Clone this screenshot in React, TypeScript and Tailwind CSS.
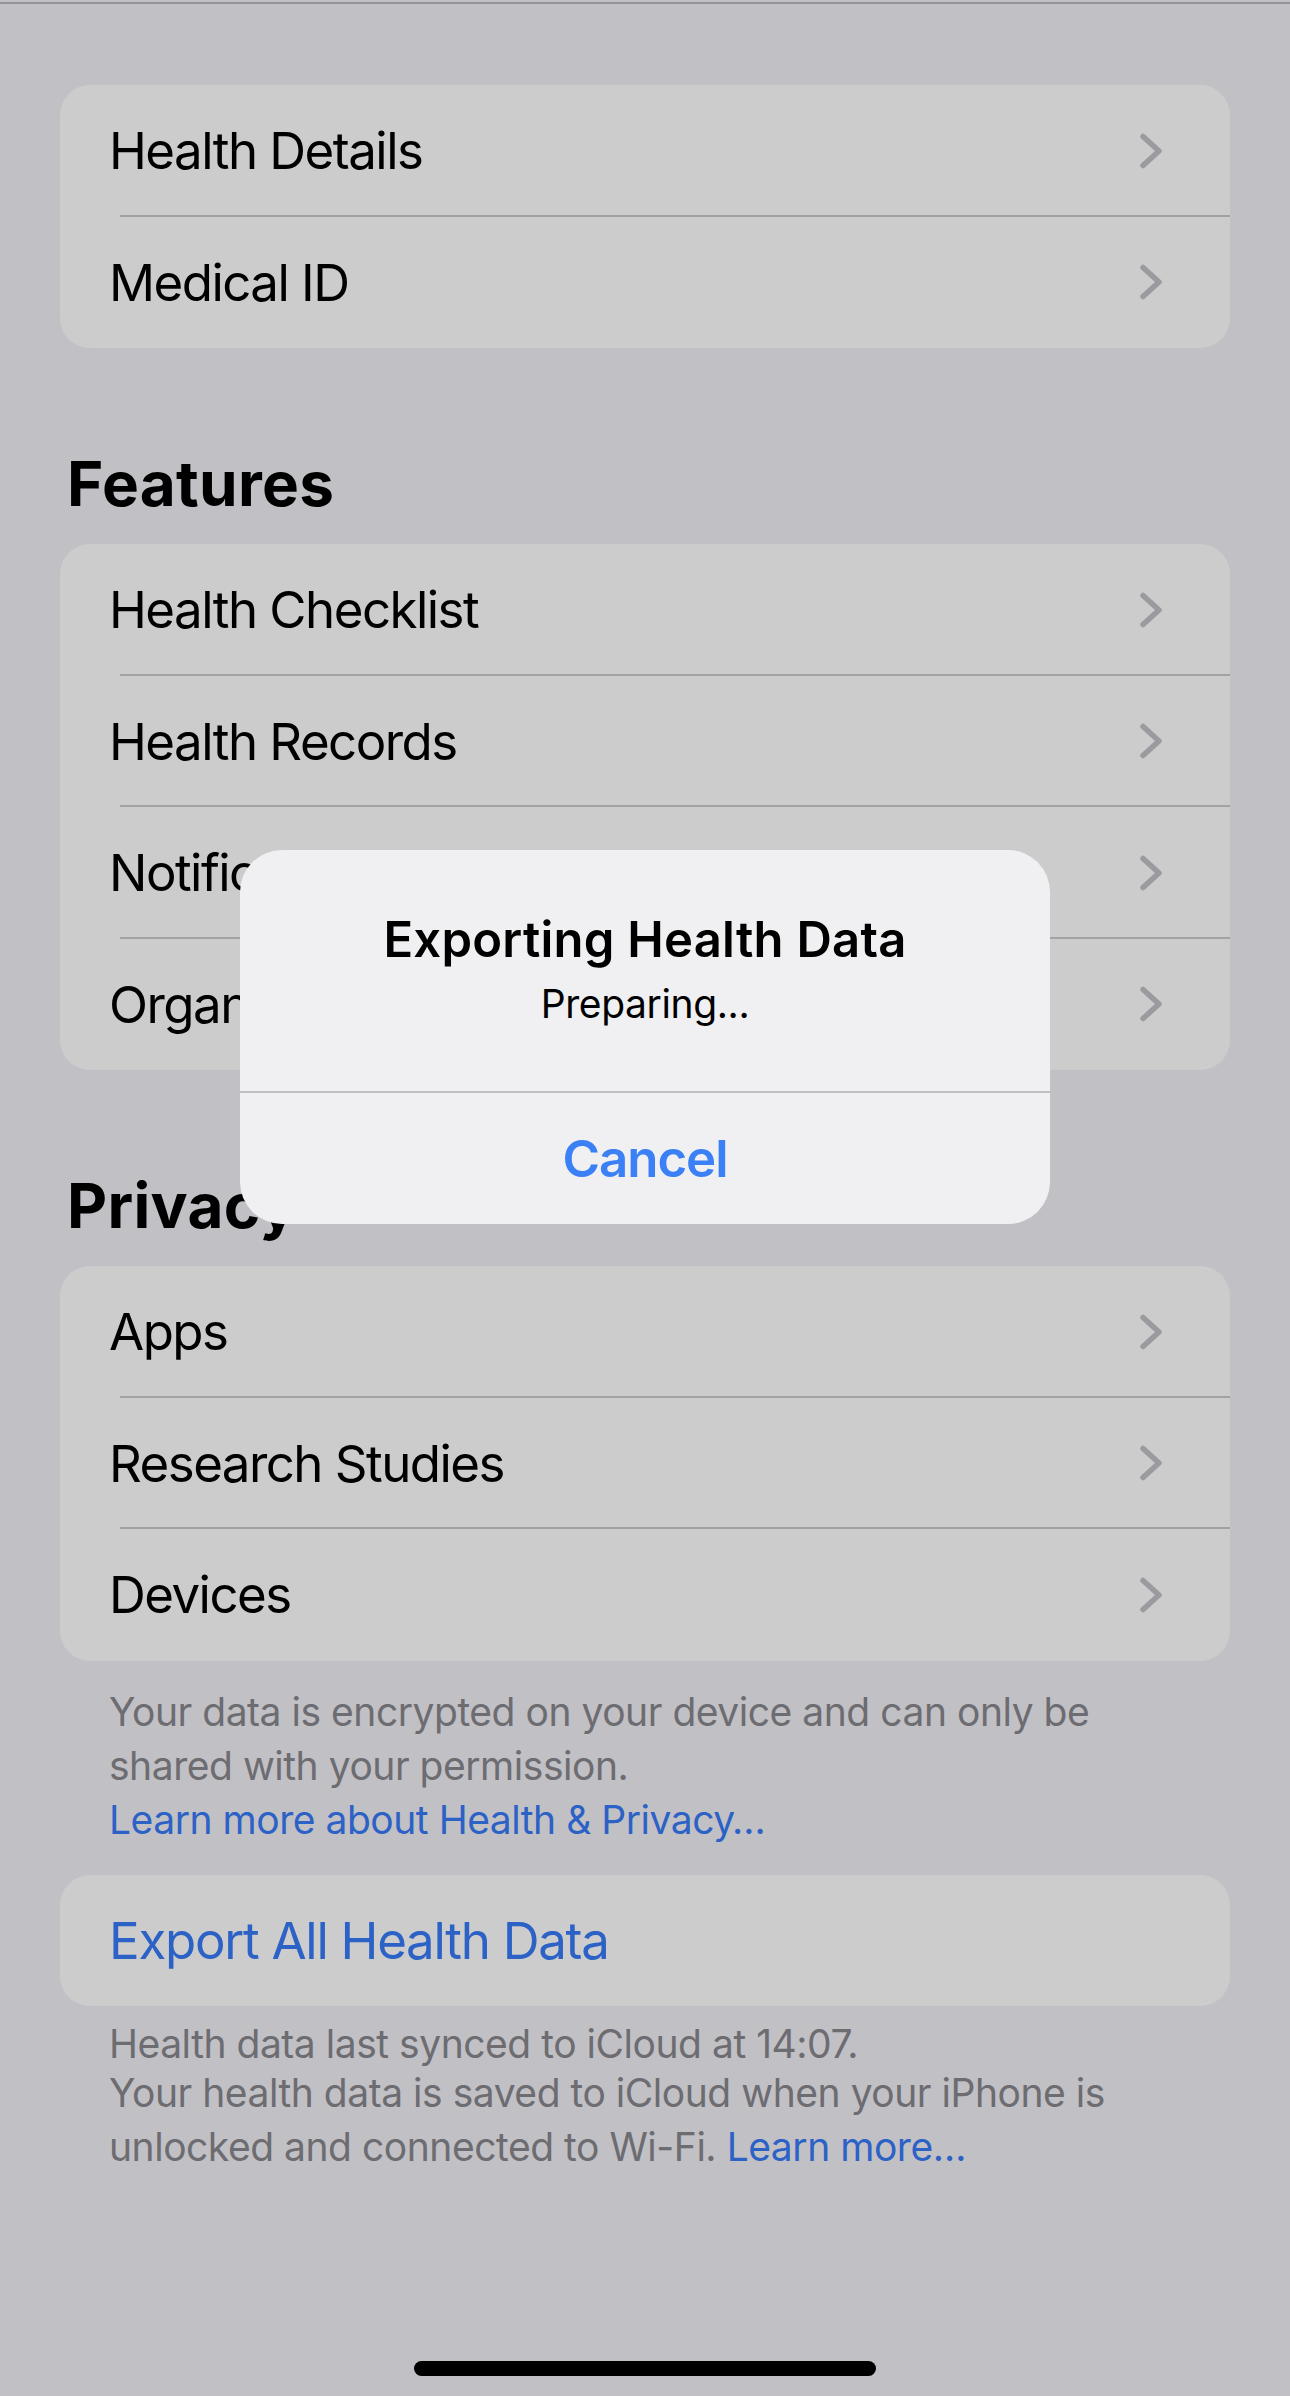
import React from "react";

const FONT = { fontFamily: "Inter, 'Noto Sans', sans-serif" };

function Chevron() {
  return (
    <svg width="25" height="36" viewBox="0 0 25 36" fill="none" className="shrink-0">
      <path d="M4 3.5 L20 18 L4 32.5" stroke="#9b9b9f" strokeWidth="5.5" strokeLinecap="round" strokeLinejoin="round" />
    </svg>
  );
}

function Row({ label, last }: { label: string; last?: boolean }) {
  return (
    <div className="relative flex h-[131.5px] items-center justify-between pl-[49px] pr-[66px]">
      <span className="text-[51px] leading-none tracking-[-0.03em] text-black">{label}</span>
      <Chevron />
      {!last && <div className="absolute bottom-0 left-[60px] right-0 h-[2px] bg-[#a2a2a5]" />}
    </div>
  );
}

function Group({ items }: { items: string[] }) {
  return (
    <div className="overflow-hidden rounded-[30px] bg-[#cccccc]">
      {items.map((it, i) => (
        <Row key={it} label={it} last={i === items.length - 1} />
      ))}
    </div>
  );
}

function Heading({ children }: { children: React.ReactNode }) {
  return (
    <h2 className="mt-[105px] mb-[29px] pl-[7px] text-[62px] font-bold leading-none tracking-[0.005em] text-black">
      {children}
    </h2>
  );
}

export default function App() {
  return (
    <div style={FONT} className="relative h-[2396px] w-[1290px] overflow-hidden bg-[#c1c0c5]">
      <div className="absolute left-0 right-0 top-[2px] h-[2px] bg-[#949497]" />

      <div className="px-[60px] pt-[85px]">
        <Group items={["Health Details", "Medical ID"]} />

        <Heading>Features</Heading>
        <Group items={["Health Checklist", "Health Records", "Notifications", "Organ Donation"]} />

        <Heading>Privacy</Heading>
        <Group items={["Apps", "Research Studies", "Devices"]} />

        <p className="mt-[24px] pl-[49px] pr-[40px] text-[39px] leading-[54px] tracking-[-0.012em] text-[#6c6c71]">
          Your data is encrypted on your device and can only be shared with your permission.
          <br />
          <span className="text-[#2c61c6]">Learn more about Health &amp; Privacy…</span>
        </p>

        <div className="mt-[28px] flex h-[131px] items-center rounded-[30px] bg-[#cccccc] pl-[49px]">
          <span className="text-[51px] leading-none tracking-[-0.025em] text-[#2c61c6]">Export All Health Data</span>
        </div>

        <div className="mt-[11px] pl-[49px] pr-[40px] text-[39px] leading-[54px] tracking-[-0.012em] text-[#6c6c71]">
          <p className="mb-[-5px]">Health data last synced to iCloud at 14:07.</p>
          <p>
            Your health data is saved to iCloud when your iPhone is unlocked and connected to Wi-Fi.{" "}
            <span className="text-[#2c61c6]">Learn more…</span>
          </p>
        </div>
      </div>

      {/* alert */}
      <div className="absolute left-[240px] top-[850px] w-[810px] overflow-hidden rounded-[42px] bg-[#f0f0f2]">
        <div className="flex flex-col items-center px-[40px] pb-[68px] pt-[65px]">
          <div className="text-[49px] font-semibold leading-none tracking-[0.005em] text-black">Exporting Health Data</div>
          <div className="mt-[20px] text-[39px] leading-none tracking-[-0.01em] text-black">Preparing...</div>
        </div>
        <div className="h-[2px] bg-[#bfbfc2]" />
        <div className="flex h-[131px] items-center justify-center">
          <span className="text-[51px] font-semibold leading-none tracking-[-0.02em] text-[#3b80f5]">Cancel</span>
        </div>
      </div>

      {/* home indicator */}
      <div className="absolute left-[414px] top-[2361px] h-[15px] w-[462px] rounded-full bg-black" />
    </div>
  );
}
